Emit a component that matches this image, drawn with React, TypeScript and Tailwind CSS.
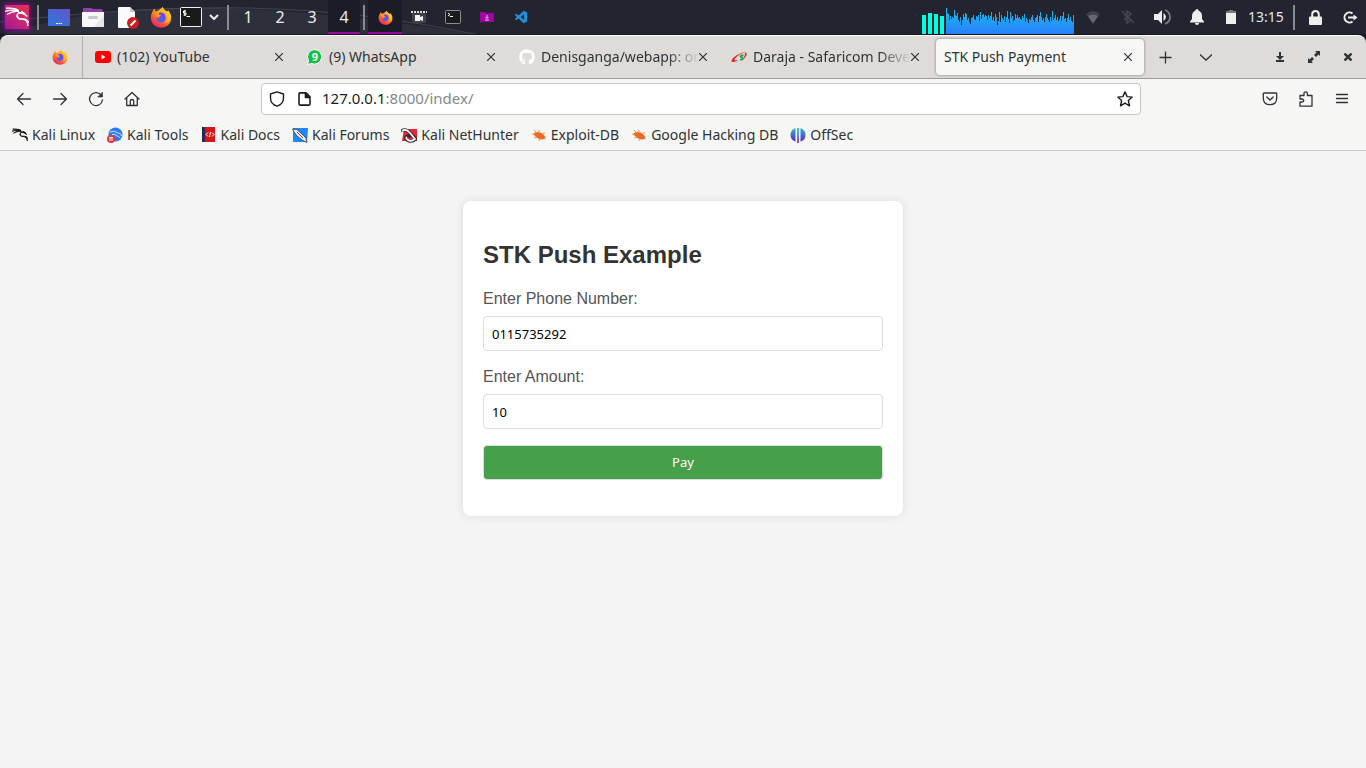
import React, { useState } from "react";
import type { ReactNode } from "react";
import { FaGithub } from "react-icons/fa";
import { SiKalilinux } from "react-icons/si";
import { VscVscode } from "react-icons/vsc";

const CPU_HISTORY = [
  26, 21, 20, 14, 18, 15, 17, 16, 24, 19, 18, 21, 14, 12, 17, 9, 14, 20, 17, 21, 20, 14, 16, 12, 10, 16, 17, 19, 15, 14,
  18, 17, 19, 13, 22, 15, 19, 20, 17, 19, 18, 14, 19, 16, 18, 22, 14, 17, 13, 20, 17, 9, 13, 22, 12, 19, 16, 14, 18, 12,
  17, 23, 15, 11, 22, 16, 18, 13, 14, 20, 16, 19, 16, 17, 15, 14, 18, 16, 20, 12, 16, 14, 11, 15, 14, 17, 19, 14, 12, 16,
  17, 19, 12, 18, 22, 17, 14, 16, 12, 17, 20, 16, 14, 12, 17, 13, 23, 14, 16, 19, 14, 17, 13, 15, 18, 13, 18, 22, 15, 16,
  12, 16, 20, 14, 17, 13, 12, 19,
];

function Firefox({ size = 22 }: { size?: number }) {
  return (
    <svg width={size} height={size} viewBox="0 0 24 24" aria-hidden="true">
      <defs>
        <linearGradient id="fx-flame" x1="0.85" y1="0.05" x2="0.2" y2="1">
          <stop offset="0" stopColor="#ffe226" />
          <stop offset="0.4" stopColor="#ff9a1f" />
          <stop offset="0.75" stopColor="#ff4a3d" />
          <stop offset="1" stopColor="#e31587" />
        </linearGradient>
        <linearGradient id="fx-globe" x1="0" y1="1" x2="0.6" y2="0">
          <stop offset="0" stopColor="#3f6cf0" />
          <stop offset="1" stopColor="#7542e5" />
        </linearGradient>
      </defs>
      <path d="M2 8C3 5 4 4 5 3l1 3 3-1 5-4c1 3 3 4 4 5l2-1c3 4 3.500 6 3 10-1 5-5 8.500-11 8.500S1 19 1 13c0-2 0-3 1-5Z" fill="url(#fx-flame)" />
      <path d="M9 8c4-2 8 0 8 4.500S14 18 11.500 18 7 16 7 13l4-2c-1-1-3-1-2-3Z" fill="url(#fx-globe)" />
      <path d="M4 8c2-2 5-1 6 0-1 2 0 2 2 2 0 1-2 1.500-3 3" fill="#ff9a22" />
      <path d="M14 2c0 5 5 5 5 11 0 3-2 5-4 6 6-1 8-5 7-9-1-3-6-4-8-8Z" fill="#ffc928" opacity=".8" />
    </svg>
  );
}

function Bug() {
  return (
    <svg width="16" height="16" viewBox="0 0 16 16" aria-hidden="true">
      <path d="M3 6c3-2 7-1 9 1s3 4 1 5-6 0-8-2-3-3-2-4Z" fill="#f26a21" />
      <path d="M1 7l3 1M3 3l3 3M8 3v3M3 11l3-1M12 6l2 0M9 12l-1 2M13 11l2 1" stroke="#f5925c" fill="none" />
    </svg>
  );
}

function Separator() {
  return <span className="h-[25px] w-[2px] shrink-0 bg-[#8a8b90]" />;
}

function PanelButton({ label, width, children }: { label: string; width: string; children: ReactNode }) {
  return (
    <button type="button" aria-label={label} className={`flex h-full shrink-0 items-center justify-center ${width}`}>
      {children}
    </button>
  );
}

function Panel() {
  const path = CPU_HISTORY.map((v, i) => `M${i} 34V${34 - v}h1V34Z`).join("");
  return (
    <header className="relative flex h-[35px] items-center justify-between border-b border-[#15161e] bg-[#222430] text-[#eeeeec]">
      <svg className="absolute inset-0 h-full w-full" aria-hidden="true">
        <path d="M0 35Q100 4 220 8T480 35Z" fill="#fff" opacity=".05" />
        <path d="M0 22Q140 6 250 8T480 35" stroke="#fff" fill="none" opacity=".14" />
      </svg>
      <div className="relative flex h-full items-center">
        <PanelButton label="Applications" width="w-[37px] pr-[3px]">
          <span className="flex size-6 items-center justify-center bg-linear-to-tr from-[#a3128f] to-[#e8304d] shadow-[0_0_5px_1px_#a000a8]">
            <SiKalilinux size={24} color="#fff" strokeWidth={1} />
          </span>
        </PanelButton>
        <Separator />
        <PanelButton label="Show desktop" width="w-10">
          <svg width="22" height="17" viewBox="0 0 22 17">
            <defs>
              <linearGradient id="desk" x1="0" y1="1" x2="1" y2="0">
                <stop stopColor="#2978e8" />
                <stop offset="1" stopColor="#6655c0" />
              </linearGradient>
            </defs>
            <path d="M0 0h22v17H0Z" fill="url(#desk)" />
            <path d="M8 14h2v1H8Zm2.500 0h1.500v1h-1.500Zm2 0H14v1h-1.500Z" fill="#fff" />
          </svg>
        </PanelButton>
        <PanelButton label="Files" width="w-7">
          <svg width="22" height="21" viewBox="0 0 22 21">
            <path d="M1 6V2q0-1 1-1h7q1 0 2 1h8q2 0 2 2v3Z" fill="#8d43a5" />
            <path d="M0 5h22v14q0 1-1 1H1q-1 0-1-1Z" fill="#f7f7f7" />
            <path d="M22 8 12 20h9q1 0 1-1Z" fill="#e6e6e6" />
            <rect x="6" y="9" width="10" height="3" rx="1.500" fill="#c7c7c7" />
          </svg>
        </PanelButton>
        <PanelButton label="Text editor" width="w-[42px]">
          <svg width="22" height="23" viewBox="0 0 22 23">
            <path d="M2 1h11l5 5v15q0 1-1 1H2q-1 0-1-1V2q0-1 1-1Z" fill="#fafafa" />
            <path d="M13 1v5h5Z" fill="#c9c9c9" />
            <circle cx="16" cy="17" r="6" fill="#cf1c20" />
            <path d="m13.500 19.500 5-5" stroke="#fff" strokeWidth="2.200" />
          </svg>
        </PanelButton>
        <PanelButton label="Firefox" width="w-6">
          <Firefox />
        </PanelButton>
        <PanelButton label="Terminal" width="w-9">
          <svg width="22" height="20" viewBox="0 0 22 20">
            <rect x=".5" y=".5" width="21" height="19" rx="1" fill="#181a1c" stroke="#f0f0f0" />
            <path d="M6 4H3.500v2H6v2H3.500M4.800 3v6M6.500 9.500H10" stroke="#fff" fill="none" />
          </svg>
        </PanelButton>
        <PanelButton label="More launchers" width="w-[18px] pr-2">
          <svg width="10" height="6" viewBox="0 0 10 6" fill="none" stroke="currentColor" strokeWidth="2">
            <path d="m1 1 4 4 4-4" />
          </svg>
        </PanelButton>
        <Separator />
        <nav className="ml-[3px] flex h-full text-base" aria-label="Workspaces">
          {["1", "2", "3", "4"].map((n) => (
            <button
              key={n}
              type="button"
              className={n === "4" ? "w-8 border-b-2 border-[#9b0aa0] bg-[#1b1c28] pt-[2px]" : "w-8"}
            >
              {n}
            </button>
          ))}
        </nav>
        <span className="mx-[3px] flex">
          <Separator />
        </span>
        <span className="flex h-full w-[34px] border-b-2 border-[#9b0aa0] bg-[#1b1c28] pt-[2px]">
          <PanelButton label="Firefox window" width="w-full">
            <Firefox size={15} />
          </PanelButton>
        </span>
        <PanelButton label="Recorder" width="w-[34px]">
          <svg width="16" height="14" viewBox="0 0 16 14">
            <path d="M1 3h14v9q0 1-1 1H2q-1 0-1-1Z" fill="#3f4146" />
            <path d="M0 2h16" stroke="#ddd" strokeWidth="2" strokeDasharray="2 1" />
            <path d="M4 5h5v2l3-1v5l-3-1v1H4Z" fill="#f2f2f2" />
          </svg>
        </PanelButton>
        <PanelButton label="Terminal window" width="w-[34px]">
          <svg width="16" height="14" viewBox="0 0 16 14">
            <rect x=".5" y=".5" width="15" height="13" rx="1" fill="#191b1d" stroke="#8e8e8e" />
            <path d="m3 3 2 1.500L3 6M5 6.500h3" stroke="#fff" fill="none" />
          </svg>
        </PanelButton>
        <PanelButton label="Downloads" width="w-[34px]">
          <svg width="14" height="10" viewBox="0 0 14 10">
            <path d="M0 0h5l1 1h8v9H0Z" fill="#a300a3" />
            <path d="M7 3v3M5.500 5 7 6.500 8.500 5M5 8h4" stroke="#e9c5e9" fill="none" />
          </svg>
        </PanelButton>
        <PanelButton label="Visual Studio Code" width="w-[34px]">
          <VscVscode size={15} color="#1e93dc" />
        </PanelButton>
      </div>

      <div className="relative flex h-full items-center">
        <svg width="152" height="34" viewBox="0 0 152 34" shapeRendering="crispEdges" role="img" aria-label="Processor load">
          <defs>
            <linearGradient id="load" gradientUnits="userSpaceOnUse" x1="0" y1="8" x2="0" y2="34">
              <stop stopColor="#12bfe4" />
              <stop offset="1" stopColor="#2a7fff" />
            </linearGradient>
          </defs>
          <path d="M0 15h4v19H0ZM6 13h4v21H6ZM12 14h4v20h-4ZM18 16h4v18h-4Z" fill="#00ffde" />
          <path d={path} fill="url(#load)" transform="translate(24 0)" />
        </svg>
        <PanelButton label="Wireless" width="w-[38px]">
          <svg width="14" height="13" viewBox="0 0 14 13">
            <path d="M0 3q7-6 14 0L7 13Z" fill="#3d3f49" />
            <path d="M2 5q5-3 10 0l-5 7.500Z" fill="#666871" />
          </svg>
        </PanelButton>
        <PanelButton label="Bluetooth" width="w-8">
          <svg width="14" height="14" viewBox="0 0 14 14" fill="none" stroke="#42444d" strokeWidth="1.700">
            <path d="m3 4 7 6-4 3V1l4 3-7 6M1 1l12 12" />
          </svg>
        </PanelButton>
        <PanelButton label="Volume" width="w-[36px]">
          <svg width="17" height="16" viewBox="0 0 17 16">
            <path d="M0 5h4l4-4v14l-4-4H0Z" fill="#eeeeec" />
            <path d="M9.500 4q5 4 0 8" fill="#eeeeec" />
            <path d="M11 1q5 2 5 7t-5 7" stroke="#7b7c83" strokeWidth="1.800" fill="none" />
          </svg>
        </PanelButton>
        <PanelButton label="Notifications" width="w-[34px]">
          <svg width="14" height="16" viewBox="0 0 14 16" fill="currentColor">
            <path d="M7 0q1.500 0 1.500 1.500Q12 3 12 7v3l2 2.500v1H0v-1L2 10V7q0-4 3.500-5.500Q5.500 0 7 0ZM5 14h4q0 2-2 2t-2-2Z" />
          </svg>
        </PanelButton>
        <PanelButton label="Battery" width="w-[34px]">
          <svg width="10" height="14" viewBox="0 0 10 14">
            <path d="M3 0h4v1h3v3H0V1h3Z" fill="#777980" />
            <path d="M0 3h10v11H0Z" fill="#eeeeec" />
          </svg>
        </PanelButton>
        <time className="w-[45px] text-sm text-[#e3e6ee]">13:15</time>
        <Separator />
        <PanelButton label="Lock screen" width="w-10">
          <svg width="13" height="15" viewBox="0 0 13 15">
            <path d="M3.200 7V4.500q0-3.500 3.300-3.500t3.300 3.500V7" stroke="#eeeeec" strokeWidth="2" fill="none" />
            <rect y="6.500" width="13" height="8.500" rx="1" fill="#eeeeec" />
          </svg>
        </PanelButton>
        <PanelButton label="Log out" width="w-[31px]">
          <svg width="15" height="13" viewBox="0 0 15 13" fill="none" stroke="currentColor" strokeWidth="2">
            <path d="M9.500 2.500a5 5 0 1 0 0 8M5 6.500h7" />
            <path d="M10.500 3.500 14.500 6.500l-4 3Z" fill="currentColor" stroke="none" />
          </svg>
        </PanelButton>
      </div>
    </header>
  );
}

function CloseIcon() {
  return (
    <svg width="8" height="8" viewBox="0 0 8 8" stroke="currentColor" strokeWidth="1.200" aria-hidden="true">
      <path d="m0 0 8 8M8 0 0 8" />
    </svg>
  );
}

const TABS: { title: string; icon: ReactNode; active?: boolean; faded?: boolean }[] = [
  {
    title: "(102) YouTube",
    icon: (
      <svg width="16" height="16" viewBox="0 0 16 16">
        <rect y="2" width="16" height="12" rx="3" fill="#f00" />
        <path d="m6.500 5.500 4 2.500-4 2.500Z" fill="#fff" />
      </svg>
    ),
  },
  {
    title: "(9) WhatsApp",
    icon: (
      <svg width="16" height="16" viewBox="0 0 16 16">
        <path d="M8 .5a7.300 7.300 0 1 1-3.500 14L.5 15.500l1-4A7.300 7.300 0 0 1 8 .5Z" fill="#10c143" stroke="#fff" />
        <text x="8" y="12" fontSize="11" fontWeight="700" textAnchor="middle" fill="#fff">9</text>
      </svg>
    ),
  },
  { title: "Denisganga/webapp: on", icon: <FaGithub size={16} color="#fff" />, faded: true },
  {
    title: "Daraja - Safaricom Deve",
    icon: (
      <svg width="16" height="16" viewBox="0 0 16 16">
        <path d="M15.500 3C12 2 0 8 .5 12.500 3 14 6 12 7 11 3 12 3 11 4 9.500 6 7 12 3 15.500 3Z" fill="#e32227" />
        <path d="M14 3.500q2 0 1.500 2.500t-3 4q2-4 1.500-6.500Z" fill="#e32227" />
        <path d="M12.500 6.500c-3-.5-4 1-1.500 2 2 1 .5 2.500-2 2" stroke="#31994d" strokeWidth="1.800" fill="none" />
      </svg>
    ),
    faded: true,
  },
  { title: "STK Push Payment", icon: null, active: true },
];

function TabBar() {
  return (
    <div className="bg-[#1b1c28]">
      <div className="flex h-11 items-center rounded-t-lg border-t border-b border-t-white border-b-[#9b9a98] bg-[#dfdbd8] text-[#2e3436]">
        <button type="button" aria-label="Firefox View" className="flex h-full w-[83px] shrink-0 items-center justify-end border-r border-[#b3afac] pr-[14px]">
          <Firefox size={16} />
        </button>
        <div className="ml-[3px] flex min-w-0 max-w-[1060px] flex-1">
          {TABS.map((tab) => (
            <div key={tab.title} className="min-w-0 flex-1 px-[2px]">
              <div
                className={
                  tab.active
                    ? "flex h-9 items-center rounded bg-[#f7f7f5] pr-3 pl-2 shadow-[0_0_3px_#777]"
                    : "flex h-9 items-center pr-[13px] pl-[7px]"
                }
              >
                {tab.icon && <span className="mr-[6px] shrink-0">{tab.icon}</span>}
                <span
                  className={
                    tab.faded
                      ? "min-w-0 flex-1 mask-r-from-[126px] mask-r-to-100% whitespace-nowrap"
                      : "min-w-0 flex-1 whitespace-nowrap"
                  }
                >
                  {tab.title}
                </span>
                <button type="button" aria-label={`Close ${tab.title}`} className="shrink-0">
                  <CloseIcon />
                </button>
              </div>
            </div>
          ))}
        </div>
        <button type="button" aria-label="New tab" className="flex w-[39px] shrink-0 justify-center">
          <svg width="13" height="13" viewBox="0 0 13 13" stroke="currentColor" strokeWidth="1.300">
            <path d="M6.500.5v12M.5 6.500h12" />
          </svg>
        </button>
        <button type="button" aria-label="List all tabs" className="flex w-[42px] shrink-0 justify-center">
          <svg width="12" height="7" viewBox="0 0 12 7" fill="none" stroke="currentColor" strokeWidth="1.300">
            <path d="m0 .5 6 5.500L12 .5" />
          </svg>
        </button>
        <div className="ml-auto flex shrink-0 pr-[1px]">
          <button type="button" aria-label="Minimize" className="flex w-[34px] items-center justify-center">
            <svg width="8" height="10" viewBox="0 0 8 10" fill="currentColor">
              <path d="M3 0h2v4h3L4 8 0 4h3ZM0 8h8v2H0Z" />
            </svg>
          </button>
          <button type="button" aria-label="Restore" className="flex w-[34px] items-center justify-center">
            <svg width="12" height="12" viewBox="0 0 12 12" fill="currentColor">
              <path d="M7 0h5v5l-1.500-1.500L8 6 6 4l2.500-2.500ZM5 12H0V7l1.500 1.500L4 6l2 2-2.500 2.500Z" />
            </svg>
          </button>
          <button type="button" aria-label="Close window" className="flex w-[34px] items-center justify-center">
            <svg width="8" height="8" viewBox="0 0 8 8" stroke="currentColor" strokeWidth="2.400">
              <path d="m.5.5 7 7M7.500.5l-7 7" />
            </svg>
          </button>
        </div>
      </div>
    </div>
  );
}

function ToolButton({ label, children }: { label: string; children: ReactNode }) {
  return (
    <button type="button" aria-label={label} className="flex h-8 w-9 shrink-0 items-center justify-center">
      <svg width="16" height="16" viewBox="0 0 16 16" fill="none" stroke="currentColor" strokeWidth="1.300" strokeLinecap="round" strokeLinejoin="round">
        {children}
      </svg>
    </button>
  );
}

function NavBar() {
  return (
    <div className="flex h-10 items-center text-[#2e3436]">
      <div className="flex w-[261px] shrink-0 pl-[6px]">
        <ToolButton label="Back">
          <path d="M1.500 8h13M7 2.500 1.500 8 7 13.500" />
        </ToolButton>
        <ToolButton label="Forward">
          <path d="M1.500 8h13M9 2.500 14.500 8 9 13.500" />
        </ToolButton>
        <ToolButton label="Reload">
          <path d="M13.500 4.500A6.500 6.500 0 1 0 14.500 9" />
          <path d="M14.500 1.500v4.500H10Z" fill="currentColor" strokeWidth=".6" />
        </ToolButton>
        <ToolButton label="Home">
          <path d="M1 8 8 1.500 15 8M2.700 7v7.500h10.600V7M6.300 14V10q0-1.500 1.700-1.500T9.700 10v4" />
        </ToolButton>
      </div>
      <div className="flex h-8 min-w-0 flex-1 items-center rounded border border-[#cbc5c1] bg-white px-[7px] text-[#1b1d1e]">
        <svg width="16" height="16" viewBox="0 0 16 16" fill="none" stroke="currentColor" strokeWidth="1.400" strokeLinejoin="round" aria-hidden="true">
          <path d="M8 .8 14.500 3v4q0 6-6.500 8.200Q1.500 13 1.500 7V3Z" />
        </svg>
        <svg className="ml-[13px]" width="13" height="14" viewBox="0 0 13 14" fill="none" stroke="currentColor" strokeWidth="1.600" strokeLinejoin="round" aria-hidden="true">
          <path d="M2 .9h6l4 4v7.200q0 1-1 1H2q-1 0-1-1V1.900q0-1 1-1Z" />
          <path d="M7.500 1v4.500H12" fill="currentColor" />
        </svg>
        <div className="ml-[11px] flex-1 text-[15px]">
          127.0.0.1<span className="text-[#85888a]">:8000/index/</span>
        </div>
        <button type="button" aria-label="Bookmark this page">
          <svg width="16" height="16" viewBox="0 0 16 16" fill="none" stroke="currentColor" strokeWidth="1.400" strokeLinejoin="round">
            <path d="m8 .9 2.100 4.700 5.100.5-3.800 3.500 1.100 5.200L8 12.200l-4.500 2.600 1.100-5.200L.8 6.100l5.100-.5Z" />
          </svg>
        </button>
      </div>
      <div className="flex w-[225px] shrink-0 justify-end pr-[6px]">
        <ToolButton label="Save to Pocket">
          <path d="M2 2h12q.7 0 .7.700V7q0 6.700-6.700 6.700T1.300 7V2.700Q1.300 2 2 2ZM4.800 6 8 9l3.200-3" />
        </ToolButton>
        <ToolButton label="Extensions">
          <path d="M2 4.500h4V2.500q0-1.700 1.700-1.700T9.400 2.500v2H14v10.700H2V11h2q1.700 0 1.700-1.500T4 8H2Z" />
        </ToolButton>
        <ToolButton label="Menu">
          <path d="M2.500 3.500h11M2.500 7.500h11M2.500 11.500h11" />
        </ToolButton>
      </div>
    </div>
  );
}

const BOOKMARKS: { title: string; icon: ReactNode }[] = [
  { title: "Kali Linux", icon: <SiKalilinux size={16} color="#000" strokeWidth={1} /> },
  {
    title: "Kali Tools",
    icon: (
      <svg width="16" height="16" viewBox="0 0 16 16">
        <circle cx="8.500" cy="7.500" r="7" fill="#2d7bf4" />
        <path d="M3 5q5-2 8 1 3 0 3.500 3M5 7.500q3-1 5 1.500 2 0 3 2" stroke="#cfe3ff" fill="none" />
        <circle cx="4" cy="12" r="4" fill="#ee3338" />
        <path d="M2 10.500h4M3 10.500v3.500M5 10.500v3.500" stroke="#fff" />
      </svg>
    ),
  },
  {
    title: "Kali Docs",
    icon: (
      <svg width="16" height="16" viewBox="0 0 16 16">
        <path d="M1 0h13v15H1Z" fill="#d91418" />
        <path d="M1 0h3v15H1Z" fill="#272b53" />
        <path d="m7 5.500-2 2 2 2M11 5.500l2 2-2 2M9.500 5l-1 5" stroke="#fff" fill="none" />
      </svg>
    ),
  },
  {
    title: "Kali Forums",
    icon: (
      <svg width="16" height="16" viewBox="0 0 16 16">
        <path d="M1 1h15l-1 14H1Z" fill="#2386f8" />
        <path d="m.5 2 4.500.5L11 8l3 3 1 4.500-5-2.500-5-4-3-4Z" fill="#e8edf2" stroke="#30343a" strokeWidth=".8" />
        <path d="m5 5 6 6" stroke="#50565c" />
      </svg>
    ),
  },
  {
    title: "Kali NetHunter",
    icon: (
      <svg width="16" height="16" viewBox="0 0 16 16">
        <path d="M3 2h13v12H1Z" fill="#e72438" />
        <path d="M0 4q5-3 9 2l6 6q-5 4-9 1-3-2 0-4 2-1 4 1" stroke="#292c30" strokeWidth="3" fill="none" />
        <path d="M1 4q4-3 8 2l5 6q-4 3-7 1-3-2-1-3" stroke="#fff" strokeWidth="1.700" fill="none" />
      </svg>
    ),
  },
  { title: "Exploit-DB", icon: <Bug /> },
  { title: "Google Hacking DB", icon: <Bug /> },
  {
    title: "OffSec",
    icon: (
      <svg width="16" height="16" viewBox="0 0 16 16">
        <defs>
          <linearGradient id="offsec" gradientUnits="userSpaceOnUse" x1="0" y1="0" x2="0" y2="16">
            <stop stopColor="#22c6cf" />
            <stop offset="1" stopColor="#5a18c8" />
          </linearGradient>
        </defs>
        <path d="M5.500 1v13.500Q.5 13 .5 8T5.500 1ZM10.500 1v13.500q5-1.500 5-6.500T10.500 1ZM7.200 1h1.600v15H7.200Z" fill="url(#offsec)" />
      </svg>
    ),
  },
];

function BookmarksBar() {
  return (
    <nav aria-label="Bookmarks" className="flex h-8 items-center gap-3 border-b border-[#cbc8c5] pl-3 text-[#2e3436]">
      {BOOKMARKS.map((b) => (
        <a key={b.title} href="#" className="flex items-center gap-1 whitespace-nowrap">
          {b.icon}
          {b.title}
        </a>
      ))}
    </nav>
  );
}

const FIELD = "mb-4 block h-[35px] w-full rounded border border-[#dddddd] px-2 font-['Noto_Sans',sans-serif] text-[13px]";
const LABEL = "mb-[7px] block text-base/5 text-[#555555]";

function PaymentForm() {
  const [phone, setPhone] = useState("0115735292");
  const [amount, setAmount] = useState("10");
  return (
    <main className="flex-1 bg-[#f4f4f4] px-4 pt-[50px] font-['Liberation_Sans',Arial,sans-serif]">
      <section className="mx-auto max-w-[440px] rounded-lg bg-white px-5 pt-10 pb-5 shadow-[0_0_10px_rgba(0,0,0,0.1)]">
        <h2 className="mb-5 text-2xl/7 font-bold text-[#333333]">STK Push Example</h2>
        <form onSubmit={(e) => e.preventDefault()}>
          <label htmlFor="phone" className={LABEL}>
            Enter Phone Number:
          </label>
          <input id="phone" type="text" value={phone} onChange={(e) => setPhone(e.target.value)} className={`${FIELD} text-black`} />
          <label htmlFor="amount" className={LABEL}>
            Enter Amount:
          </label>
          <input id="amount" type="text" value={amount} onChange={(e) => setAmount(e.target.value)} className={`${FIELD} text-black`} />
          <button type="submit" className={`${FIELD} bg-[#45a049] text-white`}>
            Pay
          </button>
        </form>
      </section>
    </main>
  );
}

export default function App() {
  return (
    <div className="flex min-h-screen flex-col bg-[#f6f6f4] font-['Noto_Sans',sans-serif] text-sm">
      <Panel />
      <TabBar />
      <NavBar />
      <BookmarksBar />
      <PaymentForm />
    </div>
  );
}
